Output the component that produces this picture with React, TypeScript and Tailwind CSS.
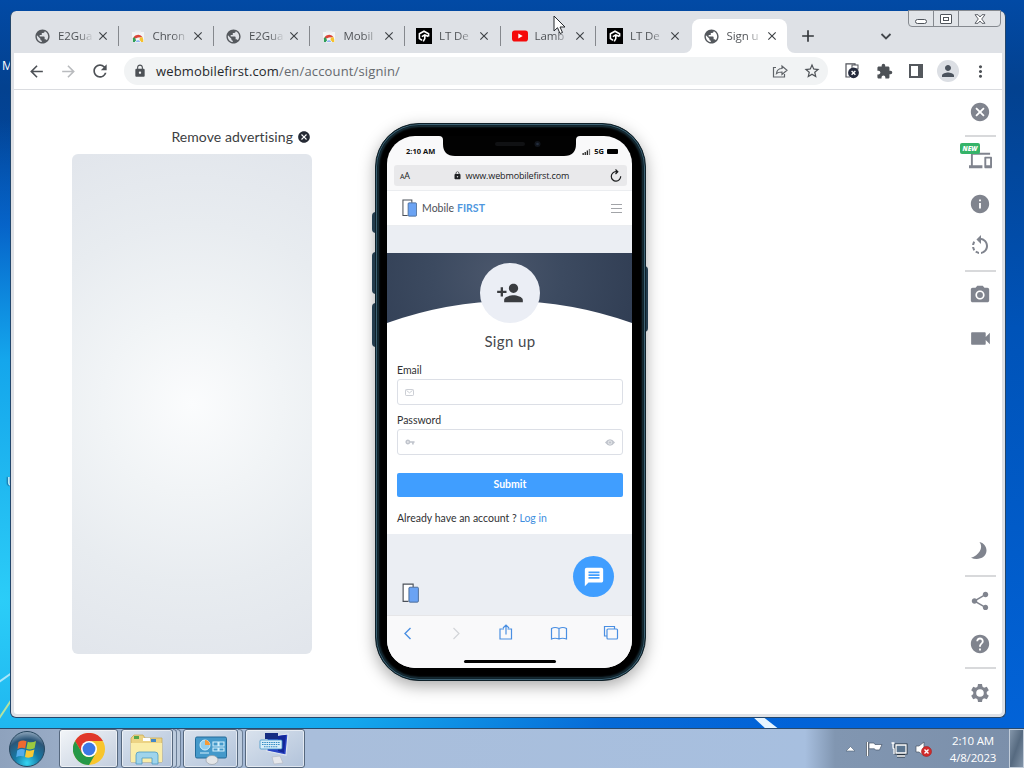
import React from 'react';
import {
  MdAdd,
  MdArrowBack,
  MdArrowForward,
  MdCancel,
  MdClose,
  MdDevices,
  MdExtension,
  MdHelp,
  MdInfo,
  MdLock,
  MdMessage,
  MdMoreVert,
  MdPerson,
  MdPersonAdd,
  MdPhotoCamera,
  MdPublic,
  MdRefresh,
  MdRotateLeft,
  MdShare,
  MdStarBorder,
  MdVideocam,
  MdVpnKey,
} from 'react-icons/md';

type TabIcon = 'globe' | 'store' | 'lt' | 'youtube';

const tabs: { title: string; icon: TabIcon; active?: boolean }[] = [
  { title: 'E2Gua', icon: 'globe' },
  { title: 'Chron', icon: 'store' },
  { title: 'E2Gua', icon: 'globe' },
  { title: 'Mobil', icon: 'store' },
  { title: 'LT De', icon: 'lt' },
  { title: 'Lamb', icon: 'youtube' },
  { title: 'LT De', icon: 'lt' },
  { title: 'Sign u', icon: 'globe', active: true },
];

function Favicon({ icon }: { icon: TabIcon }) {
  if (icon === 'globe') return <MdPublic className="size-[17px] shrink-0 text-[#54585d]" />;
  if (icon === 'store') {
    return (
      <svg viewBox="0 0 16 16" className="size-4 shrink-0">
        <path d="M2 4h12v10H2z" fill="#f3f4f5" />
        <path d="M5 3.5h6" stroke="#e8ebee" strokeWidth="2" />
        <path d="M3 11.500a5.200 5.200 0 0 1 9.600-2.200L8 9.600z" fill="#dc4437" />
        <path d="M2.900 14v-3.500l1.500-1.500L7 14z" fill="#2f9e57" />
        <path d="M12.600 9.300c.6 1.400.8 3 .7 4.700H9l1-4.600z" fill="#f6c12c" />
        <path d="M5.300 14a2.800 2.800 0 0 1 5.400 0z" fill="#4a82e8" stroke="#fff" strokeWidth=".8" />
      </svg>
    );
  }
  if (icon === 'lt') {
    return (
      <svg viewBox="0 0 16 16" className="size-4 shrink-0">
        <rect width="16" height="16" fill="#000" />
        <path d="M12.600 8.600V5.800L8 3.200 3.400 5.800v4.800L6 12.200M5.800 8.600l3-1.800 3.600 1.700M8.800 7v3.600l-1.600 2.800" fill="none" stroke="#fff" strokeWidth="1.600" />
      </svg>
    );
  }
  return (
    <svg viewBox="0 0 16 16" className="size-4 shrink-0">
      <rect y="2.5" width="16" height="11" rx="2.8" fill="#f50a0a" />
      <path d="M6.3 5.6v4.8L10.7 8z" fill="#fff" />
    </svg>
  );
}

function TabStrip() {
  return (
    <div className="flex h-[41px] items-end pl-[9px]">
      {tabs.map((tab, i) => (
        <div
          key={i}
          className={`relative flex h-[34px] w-[95.5px] shrink-0 items-center pl-[11px] ${tab.active ? 'rounded-t-lg bg-white' : ''}`}
        >
          <Favicon icon={tab.icon} />
          <span className="ml-[7px] w-[38px] whitespace-nowrap bg-gradient-to-r from-[#4a4d51] from-50% to-transparent to-95% bg-clip-text font-['Open_Sans',sans-serif] text-[11.500px] tracking-[-0.1px] text-transparent">
            {tab.title}
          </span>
          <MdClose className="size-[14px] shrink-0 text-[#3f4347]" />
          {i < 6 && <span className="absolute right-0 top-[7px] h-[20px] w-px bg-[#85888d]" />}
          {tab.active && (
            <>
              <svg viewBox="0 0 8 8" className="absolute -left-2 bottom-0 size-2"><path d="M8 0v8H0a8 8 0 0 0 8-8" fill="#fff" /></svg>
              <svg viewBox="0 0 8 8" className="absolute -right-2 bottom-0 size-2"><path d="M0 0v8h8a8 8 0 0 1-8-8" fill="#fff" /></svg>
            </>
          )}
        </div>
      ))}
      <MdAdd className="mb-[7px] ml-[11px] size-5 text-[#33373b]" />
      <svg viewBox="0 0 12 12" className="mb-[11px] ml-[62px] size-3">
        <path d="m1.500 4 4.500 4.500L10.500 4" fill="none" stroke="#43474c" strokeWidth="1.800" />
      </svg>
    </div>
  );
}

function CaptionButtons() {
  return (
    <div className="absolute -top-px right-[4px] flex h-[17px] w-[93px] rounded-b border border-[#85898f] bg-[#e1e4e8]">
      <div className="flex w-[25px] items-center justify-center border-r border-[#85898f]">
        <span className="mt-[5px] h-[5px] w-[12px] rounded-sm border border-[#50555c] bg-white" />
      </div>
      <div className="flex w-[25px] items-center justify-center border-r border-[#85898f]">
        <span className="flex h-[10px] w-[12px] items-center justify-center rounded-[1px] border border-[#50555c] bg-white">
          <span className="h-[4px] w-[6px] border border-[#50555c]" />
        </span>
      </div>
      <div className="flex flex-1 items-center justify-center">
        <svg viewBox="0 0 12 10" className="h-[10px] w-3">
          <path d="M1 .7h3L6 3 8 .7h3L7.700 5 11 9.300H8L6 7 4 9.300H1L4.300 5z" fill="#fff" stroke="#50555c" strokeWidth=".9" />
        </svg>
      </div>
    </div>
  );
}

function ToolCell({ children }: { children: React.ReactNode }) {
  return <div className="flex w-8 shrink-0 items-center justify-center text-[#4d5156]">{children}</div>;
}

function Toolbar() {
  return (
    <div className="flex h-[37px] items-stretch border-b border-[#dadce0] bg-white px-[6px]">
      <ToolCell><MdArrowBack className="size-[19px]" /></ToolCell>
      <ToolCell><MdArrowForward className="size-[19px] text-[#b9bbbe]" /></ToolCell>
      <ToolCell><MdRefresh className="size-[20px]" /></ToolCell>
      <div className="mx-2 my-1 flex flex-1 items-center rounded-full bg-[#f1f3f4] pl-2">
        <MdLock className="ml-px size-[14px] text-[#4d5156]" />
        <span className="ml-[9px] mt-[2px] flex-1 whitespace-nowrap font-['Open_Sans',sans-serif] text-[13px] tracking-[0.150px] text-[#65696e]">
          <span className="text-[#26282b]">webmobilefirst.com</span>/en/account/signin/
        </span>
        <ToolCell>
          <svg viewBox="0 0 16 16" className="size-4" fill="none" stroke="#5f6368" strokeWidth="1.200">
            <path d="M4 4.500H1.500v9.500h11v-3" />
            <path d="M4.500 10.500c.4-3.300 2.500-5 5.500-5V3l5 4.300-5 4.200V9c-2.500 0-4.200.3-5.500 1.500z" />
          </svg>
        </ToolCell>
        <ToolCell><MdStarBorder className="size-[18px]" /></ToolCell>
      </div>
      <ToolCell>
        <svg viewBox="0 0 16 16" className="size-4">
          <path d="M2 2v12h4M2 2V.8h9V3" fill="none" stroke="#50535a" strokeWidth="1.200" />
          <rect x="8" y="2" width="6" height="4" fill="#fff" stroke="#50535a" />
          <circle cx="9.500" cy="9.800" r="5.400" fill="#252b3d" />
          <path d="m7.600 7.900 3.800 3.800m0-3.800-3.800 3.800" stroke="#fff" strokeWidth="1.400" />
        </svg>
      </ToolCell>
      <ToolCell><MdExtension className="size-[17px]" /></ToolCell>
      <ToolCell>
        <span className="h-[14px] w-[14px] border-2 border-r-[5px] border-[#54585d]" />
      </ToolCell>
      <ToolCell>
        <span className="flex size-[22px] items-center justify-center rounded-full bg-[#dcdfe4]">
          <MdPerson className="size-[18px] text-[#4b535d]" />
        </span>
      </ToolCell>
      <ToolCell><MdMoreVert className="size-[19px]" /></ToolCell>
    </div>
  );
}

function MobileLogo({ className }: { className: string }) {
  return (
    <svg viewBox="0 0 16 19" className={className}>
      <path d="M6 17.500H1V1h9.500v3" fill="#fff" stroke="#4b5058" strokeWidth="1.100" />
      <rect x="6.500" y="4" width="9" height="14.200" rx="1" fill="#6ba3f3" stroke="#42618a" strokeWidth=".8" />
    </svg>
  );
}

function StatusBar() {
  return (
    <div className="relative flex h-[29px] shrink-0 items-center justify-between pl-[19px] pr-[14px] font-['Open_Sans',sans-serif] text-[7.500px] font-bold text-[#111]">
      <span className="mt-[2px]">2:10 AM</span>
      <div className="mt-[2px] flex items-center">
        <svg viewBox="0 0 9 6" className="mr-[3px] h-[6px] w-[9px]">
          <path d="M.5 4h1.300v2H.5zM2.600 3h1.300v3H2.600zM4.700 1.500H6V6H4.700z" fill="#222" />
          <path d="M6.800 0h1.300v6H6.800z" fill="#777" />
        </svg>
        <span>5G</span>
        <span className="ml-[3px] h-[5px] w-[11px] rounded-[1px] bg-black" />
      </div>
      <svg viewBox="0 0 141 20" className="absolute left-[52px] top-0 h-5 w-[141px]">
        <path d="M0 0h141q-4 0-4 4v4q0 12-12 12H16Q4 20 4 8V4q0-4-4-4" fill="#020202" />
        <rect x="56" y="6" width="30" height="4" rx="2" fill="#101113" />
        <circle cx="98.500" cy="8" r="3" fill="#11151c" />
        <circle cx="98.500" cy="8" r="1.300" fill="#232d3d" />
      </svg>
    </div>
  );
}

function SignupForm() {
  return (
    <div className="h-[211px] shrink-0 bg-white pl-[10px] pr-[9px] font-['Lato',sans-serif] text-[10.500px] text-[#303133]">
      <h1 className="h-[36px] text-center text-[15px] leading-[36px] tracking-[0.400px] text-[#46484c]">Sign up</h1>
      <div className="mt-[2px] h-[18px] leading-[18px]">Email</div>
      <div className="flex h-[26px] items-center rounded-[3px] border border-[#dcdfe6] pl-[7px]">
        <svg viewBox="0 0 9 7" className="h-[7px] w-[9px]" fill="none" stroke="#bfc3ca" strokeWidth=".8">
          <rect x=".5" y=".5" width="8" height="6" rx=".8" />
          <path d="m1.500 1.500 3 2.300 3-2.300" />
        </svg>
      </div>
      <div className="mt-[6px] h-[18px] leading-[18px]">Password</div>
      <div className="flex h-[26px] items-center justify-between rounded-[3px] border border-[#dcdfe6] pl-[7px] pr-[7px] text-[#c0c4cc]">
        <MdVpnKey className="size-[10px]" />
        <svg viewBox="0 0 10 7" className="h-[7px] w-[10px]">
          <path d="M0 3.500Q5-3 10 3.500 5 10 0 3.500" fill="#c0c4cc" />
          <circle cx="5" cy="3.500" r="1.700" fill="none" stroke="#fff" strokeWidth=".6" />
        </svg>
      </div>
      <button className="mt-[18px] block h-[24px] w-full rounded-[2px] bg-[#409eff] pb-px text-center font-bold text-white">Submit</button>
      <div className="mt-[12px] h-[18px] whitespace-nowrap leading-[18px]">
        Already have an account ? <span className="text-[#3f8fe0]">Log in</span>
      </div>
    </div>
  );
}

function BrowserBar() {
  return (
    <div className="relative h-[53px] shrink-0 border-t border-[#e6e6e8] bg-[#f9f9fa]">
      <svg viewBox="0 0 245 36" className="h-[36px] w-[245px]" fill="none" stroke="#4a8fe2" strokeWidth="1.200">
        <path d="m23.500 12-5.500 5.500 5.500 5.500" strokeWidth="1.400" />
        <path d="m66.500 12 5.500 5.500-5.500 5.500" stroke="#d3d5d8" />
        <path d="M117 13h-4v10h11.500V13h-4M119 18.500V9m-3 3 3-3 3 3" />
        <path d="M172 12.500q-4-2-7.500 0v10.500q3.500-1.500 7.500 0 3.500-1.500 7.500 0V12.500q-3.500-2-7.500 0zv10.500" />
        <path d="M220 20h-2.500v-9.500h10V13" />
        <rect x="220" y="13" width="10.500" height="10" rx="1" />
      </svg>
      <span className="absolute bottom-[5px] left-[77px] h-[3px] w-[92px] rounded-full bg-black" />
    </div>
  );
}

function Phone() {
  return (
    <div className="relative mt-[33px] h-[558px] w-[271px] shrink-0">
      <span className="absolute -left-[3px] top-[89px] h-[21px] w-[4px] rounded-l-sm bg-[#2a475b]" />
      <span className="absolute -left-[3px] top-[129px] h-[42px] w-[4px] rounded-l-sm bg-[#2a475b]" />
      <span className="absolute -left-[3px] top-[180px] h-[44px] w-[4px] rounded-l-sm bg-[#2a475b]" />
      <span className="absolute -right-[2px] top-[143px] h-[66px] w-[4px] rounded-r-sm bg-[#2a475b]" />
      <div className="relative h-full rounded-[44px] border border-[#0e2029] bg-black pb-[12px] pl-[11px] pr-[13px] pt-[12px] shadow-[inset_0_0_0_1px_#3d6172,inset_0_0_0_2px_#10232c,inset_0_0_2px_3px_#1c3540,0_5px_16px_rgba(0,0,0,0.34)]">
        <div className="flex h-[532px] flex-col overflow-hidden rounded-[28px] bg-[#f9f9fa]">
          <StatusBar />
          <div className="ml-[7px] mr-[5px] flex h-[21px] shrink-0 items-center rounded-[3px] bg-[#e9e9eb] px-[6px] font-['Open_Sans',sans-serif] text-[#202124]">
            <span className="text-[9px] tracking-[-0.3px]"><span className="text-[7px]">A</span>A</span>
            <MdLock className="ml-[43px] size-[9px]" />
            <span className="ml-[4px] flex-1 text-[9px] tracking-[-0.130px]">www.webmobilefirst.com</span>
            <svg viewBox="0 0 12 13" className="-mr-px h-[13px] w-[12px]" fill="none" stroke="#1c1d1f" strokeWidth="1.200">
              <path d="M10.700 7.300A4.700 4.700 0 1 1 6 2.700h1.500M5.500.5l2.300 2.200-2.300 2.300" />
            </svg>
          </div>
          <div className="mt-[4px] flex h-[36px] shrink-0 items-center border-y border-[#ebedf0] bg-white pl-[15px] pr-[10px] font-['Lato',sans-serif] text-[10.500px] text-[#4c5056]">
            <MobileLogo className="h-[18px] w-[15px]" />
            <span className="ml-[5px] mt-[2px] tracking-[0.040px]">Mobile <span className="font-bold text-[#4f97e0]">FIRST</span></span>
            <svg viewBox="0 0 11 9" className="ml-auto h-[9px] w-[11px]" stroke="#a2a4a8" strokeWidth="1">
              <path d="M0 .5h11M0 4.500h11M0 8.500h11" />
            </svg>
          </div>
          <div className="h-[27px] shrink-0 bg-[#ebeef3]" />
          <div className="relative h-[70px] shrink-0 bg-[radial-gradient(circle_at_45%_30%,#4a566b_0%,#3c4a60_45%,#313e54_100%)]">
            <svg viewBox="0 0 245 70" className="block h-[70px] w-[245px]">
              <path d="M0 70Q122 26.500 245 70z" fill="#fff" />
            </svg>
            <span className="absolute left-[93px] top-[10px] flex size-[60px] items-center justify-center rounded-full bg-[#ebeef5]">
              <MdPersonAdd className="size-[28px] text-[#3a3c40]" />
            </span>
          </div>
          <SignupForm />
          <div className="flex h-[81px] shrink-0 items-end justify-between bg-[#ebeef3] pl-[15px] pr-[18px]">
            <MobileLogo className="mb-[12px] h-[20px] w-[17px]" />
            <span className="mb-[18px] flex size-[41px] items-center justify-center rounded-full bg-[#409eff]">
              <MdMessage className="size-[22px] text-white" />
            </span>
          </div>
          <BrowserBar />
        </div>
      </div>
    </div>
  );
}

function GearIcon() {
  return (
    <svg viewBox="0 0 20 20" className="size-5">
      <circle cx="10" cy="10" r="5.300" fill="none" stroke="#80848e" strokeWidth="3" />
      {[0, 60, 120].map((angle) => (
        <path key={angle} d="M8 1h4l.6 3.500H7.400zM8 19h4l.6-3.500H7.400z" fill="#80848e" transform={`rotate(${angle} 10 10)`} />
      ))}
    </svg>
  );
}

function SideTools() {
  const divider = 'h-[2px] w-[31px] shrink-0 bg-[#d8d9db]';
  return (
    <div className="ml-auto mr-[4px] flex w-9 flex-col items-center text-[#80848e] [&>div]:flex [&>div]:shrink-0 [&>div]:items-center">
      <div className="h-[45px] pb-[2px]"><MdCancel className="size-[22px]" /></div>
      <span className={divider} />
      <div className="relative h-[46px]">
        <MdDevices className="size-[23px]" />
        <span className="absolute -left-[9px] top-[6px] rounded-[2px] bg-[#35b368] px-[3px] font-['Open_Sans',sans-serif] text-[6.500px] font-extrabold italic leading-[11px] text-white">NEW</span>
      </div>
      <div className="h-[42px]"><MdInfo className="size-[22px]" /></div>
      <div className="h-[42px]"><MdRotateLeft className="size-[24px]" /></div>
      <span className={`${divider} mt-[3px]`} />
      <div className="h-[46px]"><MdPhotoCamera className="size-[22px]" /></div>
      <div className="h-[40px]"><MdVideocam className="size-[25px]" /></div>
      <div className="mt-auto h-[42px]">
        <svg viewBox="0 0 20 20" className="size-5">
          <path d="M9.500 1c4.500 6-1 13.500-8.500 15.700C8 20 16.500 16.500 16.500 9.500 16.500 5.500 13.500 1.800 9.500 1" fill="#80848e" />
        </svg>
      </div>
      <span className={`${divider} mt-[3px]`} />
      <div className="h-[48px] pb-px"><MdShare className="size-[22px]" /></div>
      <div className="h-[38px]"><MdHelp className="size-[22px]" /></div>
      <span className={`${divider} mt-[4px]`} />
      <div className="h-[45px] pt-[3px]"><GearIcon /></div>
    </div>
  );
}

function BrowserWindow() {
  return (
    <div className="absolute left-[10px] top-[11px] flex h-[707px] w-[996px] flex-col rounded-md border border-t-0 border-[#23466b] bg-[#dee1e6] px-[3px] pb-[3px]">
      <CaptionButtons />
      <div className="h-px shrink-0" />
      <TabStrip />
      <Toolbar />
      <div className="flex flex-1 rounded-b-[3px] bg-white pl-[58px]">
        <div className="mr-[63px] w-[240px]">
          <div className="mt-[37px] flex h-[20px] items-center justify-end gap-[4px] pr-[1px] font-['Lato',sans-serif] text-sm tracking-[0.080px] text-[#3c3e42] [font-variant-ligatures:none]">
            Remove advertising <MdCancel className="size-[14px] text-[#252a34]" />
          </div>
          <div className="mt-[7px] h-[500px] rounded-md bg-[radial-gradient(circle_at_50%_50%,#fbfcfd_0px,#f1f4f6_90px,#e8ecf0_180px,#e2e6ec_270px)]" />
        </div>
        <Phone />
        <SideTools />
      </div>
    </div>
  );
}

function StartOrb() {
  return (
    <svg viewBox="0 0 38 38" className="ml-[8px] size-[38px]">
      <defs>
        <radialGradient id="orb" cx=".5" cy=".9" r=".9">
          <stop offset="0" stopColor="#35d5f2" />
          <stop offset=".4" stopColor="#1679a5" />
          <stop offset=".75" stopColor="#2c5678" />
          <stop offset="1" stopColor="#91a9be" />
        </radialGradient>
      </defs>
      <circle cx="19" cy="19" r="17.500" fill="url(#orb)" stroke="#27475f" />
      <path d="M10.500 12q4-2.500 8-.8l-1.300 7.200q-4-1.600-7.700.8z" fill="#ee6a30" />
      <path d="M19.700 11.700q4 1.600 8.300-.7l-1.400 7.300q-4 2-8.200.4z" fill="#9bc93f" />
      <path d="M9.200 20.500q4-2.300 7.700-.8l-1.200 6.800q-4-1.400-7.500.8z" fill="#53acec" />
      <path d="M18.200 20q4 1.500 8.200-.4L25 26.500q-4 2-8 .5z" fill="#f9c934" />
    </svg>
  );
}

function ChromeLogo() {
  return (
    <svg viewBox="0 0 32 32" className="size-8">
      <circle cx="16" cy="16" r="16" fill="#f8c52c" />
      <path d="M2.100 8A16 16 0 0 1 29.900 8H16L9.100 20z" fill="#e0382b" />
      <path d="M2.100 8A16 16 0 0 0 16 32l6.900-12A8 8 0 0 1 9.100 20z" fill="#259848" />
      <circle cx="16" cy="16" r="8" fill="#fff" />
      <circle cx="16" cy="16" r="6.400" fill="#3c78e6" />
    </svg>
  );
}

function FolderIcon() {
  return (
    <svg viewBox="0 0 34 32" className="h-8 w-[34px]">
      <path d="M1 5 4 2h9l2 3h17v24H1z" fill="#ecd384" stroke="#c6a74d" strokeWidth=".7" />
      <path d="M4 3h5v3H4z" fill="#54a64b" />
      <path d="M13 5h7v3h-7z" fill="#fff" />
      <path d="M21 6h5v3h-5z" fill="#4388c7" />
      <path d="M1 10h31v19H1z" fill="#faeda9" />
      <path d="M6 31V22q0-3 3-3h16q3 0 3 3v9h-6v-6H12v6z" fill="#9fd4ec" stroke="#4d9ac2" strokeWidth=".8" />
    </svg>
  );
}

function ControlPanelIcon() {
  return (
    <svg viewBox="0 0 34 32" className="h-8 w-[34px]">
      <rect x="1.500" y="4" width="31" height="21" rx="1.500" fill="#4499ca" stroke="#246b99" />
      <circle cx="11" cy="12" r="5" fill="#8fcdef" stroke="#d4eefc" />
      <path d="M11 12V7a5 5 0 0 1 5 5z" fill="#f59a38" />
      <path d="M19 9h5v4h-5zm6 0h5v4h-5zm-6 6h5v3h-5zm6 0h5v3h-5zM6 20h9" fill="none" stroke="#d1effc" strokeWidth="1.100" />
      <ellipse cx="18" cy="27" rx="6" ry="4.500" fill="#e4e6e8" stroke="#8e969e" strokeWidth=".6" />
    </svg>
  );
}

function RemoteIcon() {
  return (
    <svg viewBox="0 0 34 32" className="h-8 w-[34px]">
      <path d="m14 24 8-1 3 7-9 1z" fill="#e5e7eb" stroke="#b1b6bf" strokeWidth=".6" />
      <path d="m9 4 21-3-2 21-19-4z" fill="#2945c4" stroke="#dfe6f0" strokeWidth="1.200" />
      <path d="m20 3 8-1-2 18-6-2z" fill="#132799" />
      <path d="M7 0h13v6H7z" fill="#162d83" />
      <rect x="2" y="7" width="22" height="9" rx="1" fill="#d7edf9" stroke="#3f94c8" strokeWidth=".8" />
      <path d="M4 9.500h18M4 11.500h18M6 13.700h14" stroke="#318bc3" strokeWidth="1.100" strokeDasharray="1.500 .8" />
    </svg>
  );
}

function TaskButton({ children, className = '' }: { children: React.ReactNode; className?: string }) {
  return (
    <div className={`flex h-[39px] items-center justify-center rounded-[3px] border border-[#56687e] bg-gradient-to-br from-[#d9e2ed] to-[#b2c3da] shadow-[inset_0_0_0_1px_rgba(255,255,255,0.55)] ${className}`}>
      {children}
    </div>
  );
}

function Taskbar() {
  return (
    <div className="flex h-10 items-center border-t border-[#2a4a6c] bg-[linear-gradient(90deg,#8ea2bd_0,#98abc5_55px,#a9bedb_310px,#a7bfdf_805px,#8196b1_835px,#7b8faa_100%)] font-['Open_Sans',sans-serif]">
      <StartOrb />
      <TaskButton className="ml-[13px] w-[59px] from-[#f2f5f8] to-[#c3cede]"><ChromeLogo /></TaskButton>
      <div className="ml-[3px] flex">
        <TaskButton className="w-[52px]"><FolderIcon /></TaskButton>
        <span className="h-[39px] w-[4px] rounded-r border border-l-0 border-[#6b7e96] bg-[#bccbdd]" />
        <span className="h-[39px] w-[4px] rounded-r border border-l-0 border-[#6b7e96] bg-[#bccbdd]" />
      </div>
      <div className="ml-[2px] flex">
        <TaskButton className="w-[55px]"><ControlPanelIcon /></TaskButton>
        <span className="h-[39px] w-[5px] rounded-r border border-l-0 border-[#6b7e96] bg-[#bccbdd]" />
      </div>
      <TaskButton className="ml-[2px] w-[60px]"><RemoteIcon /></TaskButton>
      <div className="ml-auto flex items-center">
        <svg viewBox="0 0 90 20" className="h-5 w-[90px]">
          <path d="m1 12 4.500-4.500L10 12z" fill="#fff" stroke="#4d6177" strokeWidth=".6" />
          <path d="M22.500 3v14" stroke="#2f3c4b" strokeWidth="3" />
          <path d="M22.500 3v14" stroke="#fff" strokeWidth="1.600" />
          <path d="M24 4h5l1 1.500h7L34.500 11h-4l-1-1.200H24z" fill="#fff" stroke="#47566a" strokeWidth=".7" />
          <path d="M51 6h10v8H51zM52 17h8" fill="#5c7690" stroke="#27323f" strokeWidth="3" />
          <path d="M51 6h10v8H51zM52 17h8M48 4v4q0 2 1 2v5M46.500 4h3" fill="#5c7690" stroke="#fff" strokeWidth="1.300" />
          <path d="M71 7h3l5-4v14l-5-4h-3z" fill="#fff" stroke="#4a5666" strokeWidth=".7" />
          <circle cx="81.500" cy="12.500" r="5" fill="#d22b2b" stroke="#a41e1e" strokeWidth=".6" />
          <path d="m79.500 10.500 4 4m0-4-4 4" stroke="#fff" strokeWidth="1.400" />
        </svg>
        <div className="ml-[12px] w-[52px] whitespace-nowrap text-center text-[11.500px] leading-[17px] tracking-[-0.2px] text-white">
          <div>2:10 AM</div>
          <div>4/8/2023</div>
        </div>
        <div className="ml-[10px] h-[39px] w-[15px] border border-[#c1ccd9] bg-gradient-to-br from-[#8496aa] via-[#566a80] to-[#8294a8]" />
      </div>
    </div>
  );
}

export default function App() {
  return (
    <div className="relative flex h-[768px] w-[1024px] flex-col overflow-hidden bg-[#0458b8]">
      <div className="relative flex-1 overflow-hidden bg-[radial-gradient(ellipse_820px_480px_at_0_600px,#2bcdf8_0%,#20b8f0_25%,#14a6ec_50%,rgba(8,110,215,0.7)_78%,rgba(4,75,175,0)_100%),linear-gradient(180deg,#024aa5_0%,#03418f_12%,#0053b8_45%,#0263d8_100%)]">
        <svg viewBox="0 0 1024 728" className="absolute inset-0 h-full w-full" fill="none">
          <path d="m-4 684 20-14" stroke="#a9e6fa" strokeWidth="2" />
          <path d="m-2 720 16-24" stroke="#b5e3a0" strokeWidth="2" />
          <path d="m752 716 10 0 18 14h-13z" fill="#e7f5ff" />
        </svg>
        <span className="absolute left-[2px] top-[58px] font-['Open_Sans',sans-serif] text-xs text-white">M</span>
        <span className="absolute left-[7px] top-[474px] font-['Open_Sans',sans-serif] text-xs text-white [text-shadow:-1px_0_1px_#13425f]">U</span>
        <BrowserWindow />
      </div>
      <Taskbar />
      <svg viewBox="0 0 14 20" className="absolute left-[553px] top-[15px] h-5 w-[14px]">
        <path d="M1 1v15l3.500-3.300L7 18.500l2.500-1L7 12h5z" fill="#fff" stroke="#24282d" />
      </svg>
    </div>
  );
}
